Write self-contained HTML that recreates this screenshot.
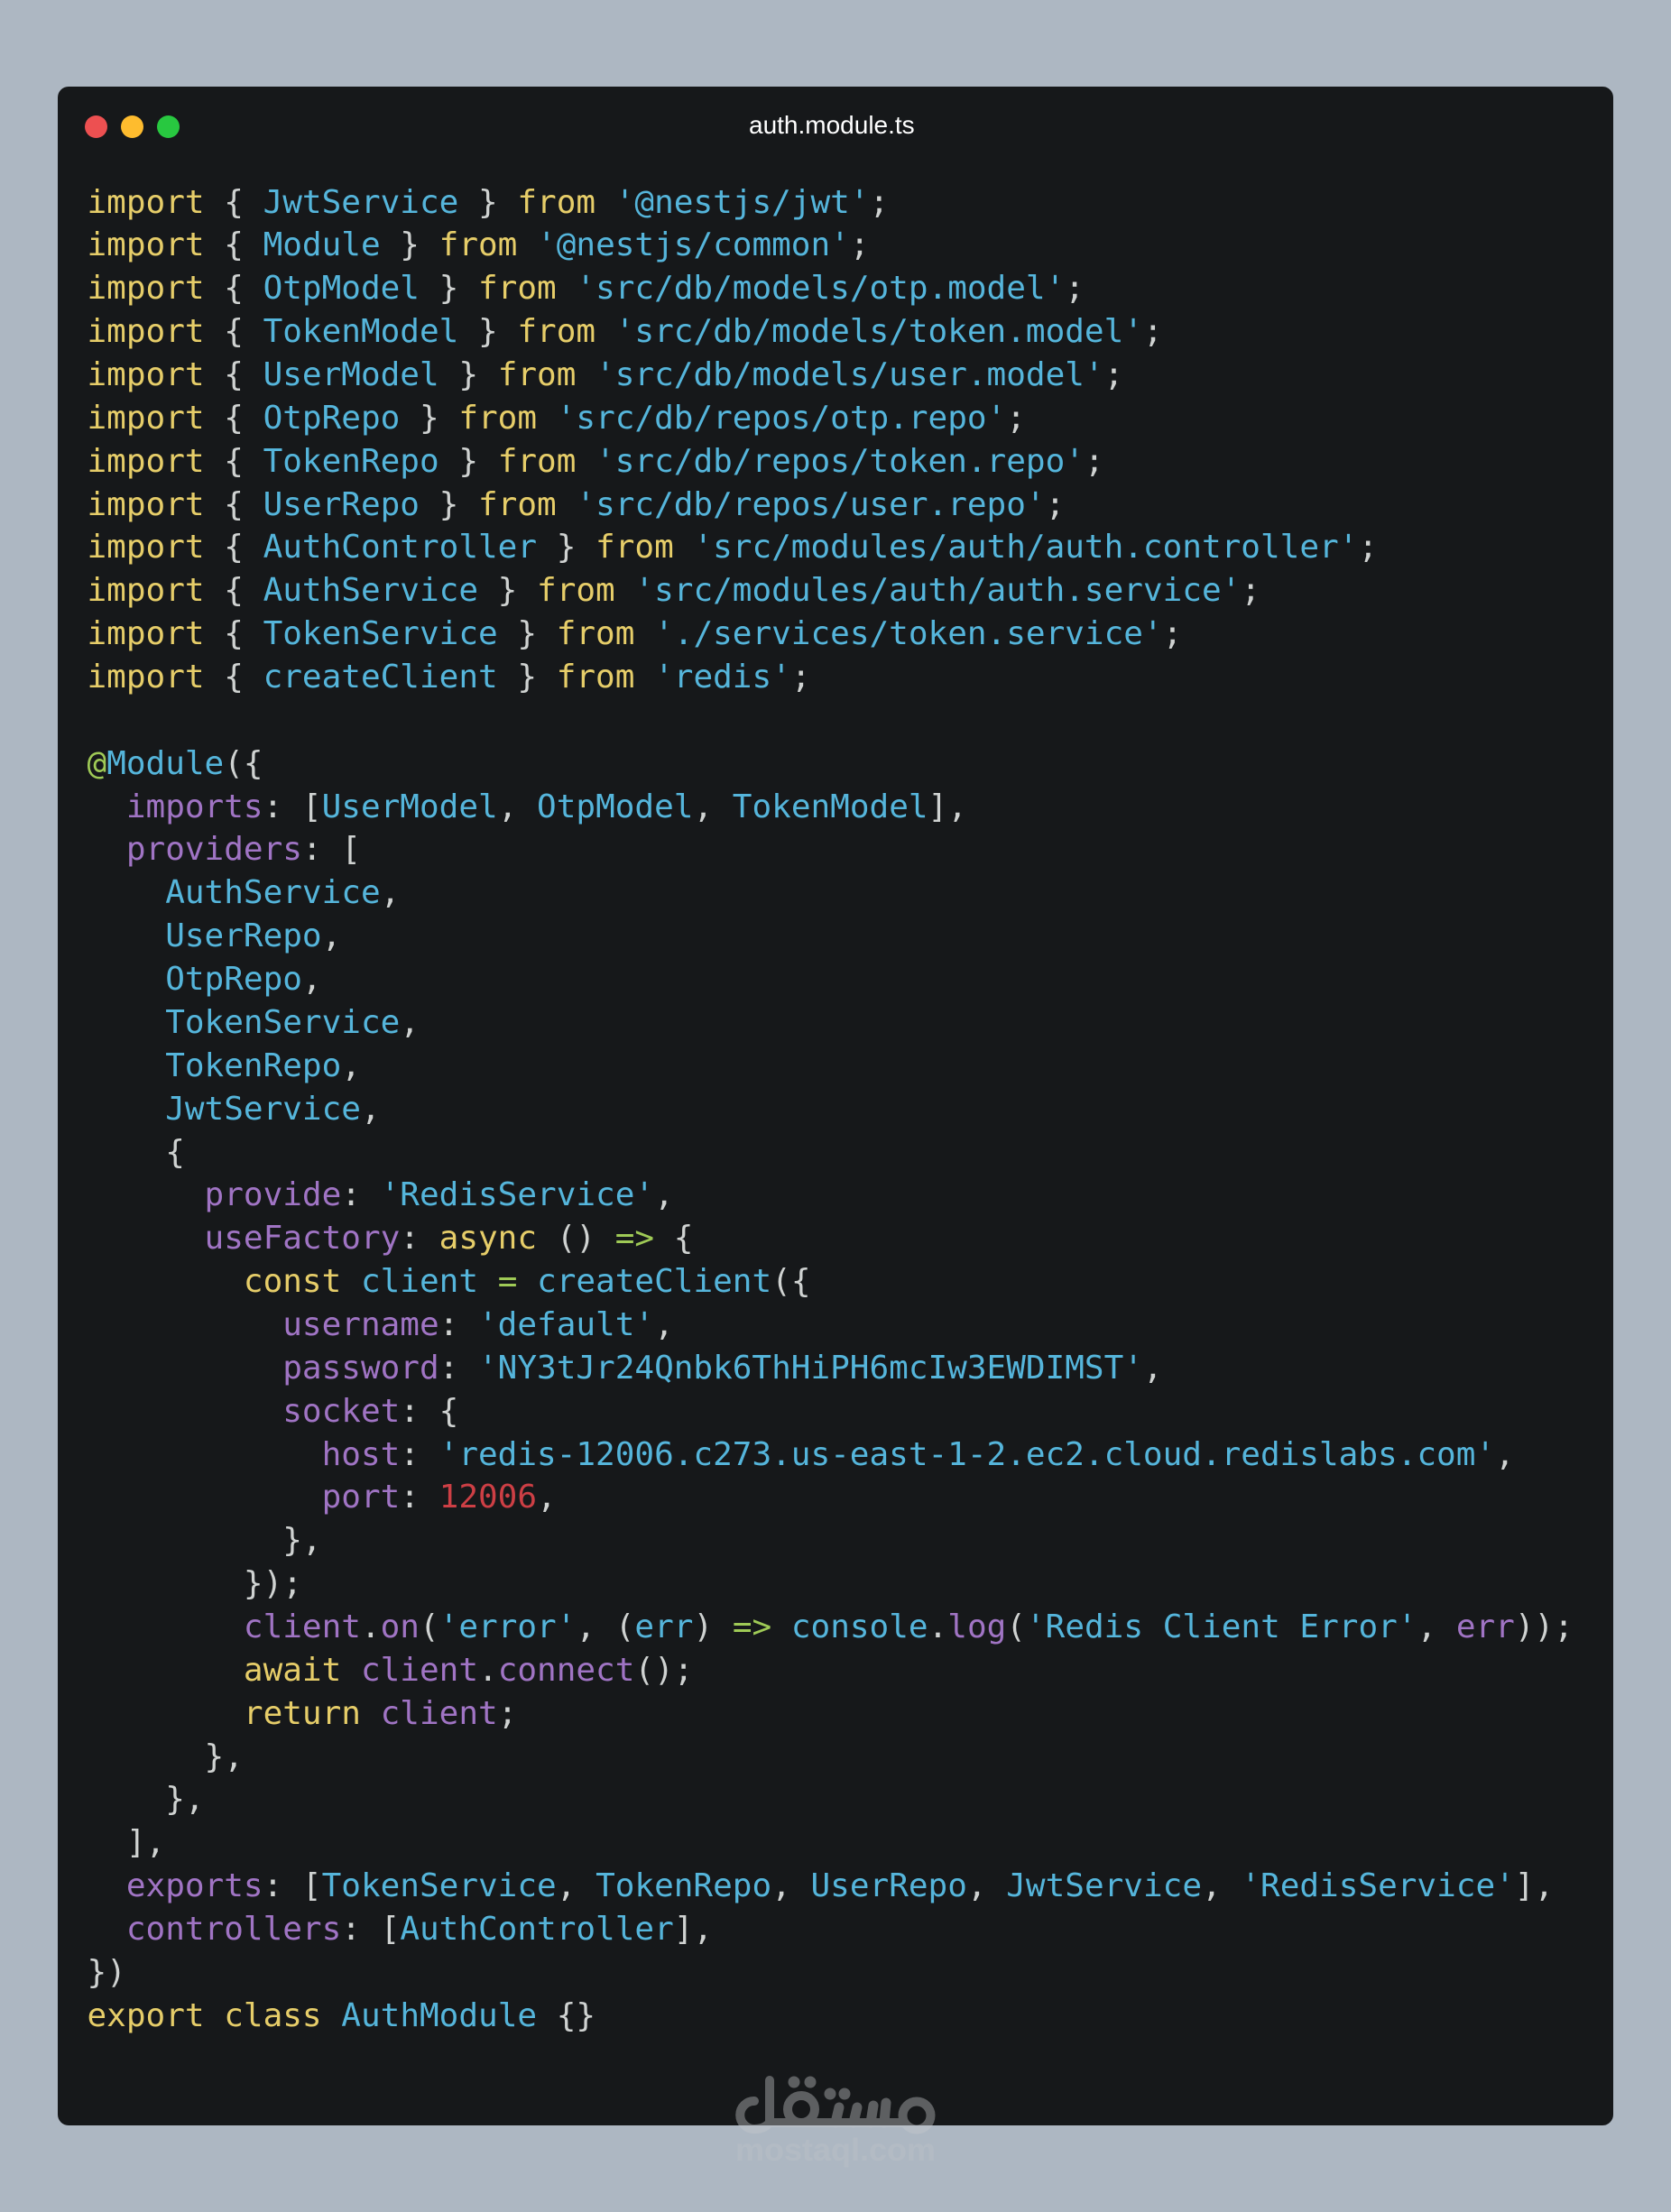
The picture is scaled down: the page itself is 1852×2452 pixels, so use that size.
<!DOCTYPE html>
<html lang="en">
<head>
<meta charset="utf-8">
<title>auth.module.ts</title>
<style>
html,body{margin:0;padding:0;background:#adb7c2;}
body{position:relative;width:1852px;height:2452px;overflow:hidden;}
#card{position:absolute;left:64px;top:96px;width:1724px;height:2260px;background:#16181a;border-radius:12px;}
.dot{position:absolute;top:127.5px;width:25px;height:25px;border-radius:50%;}
#title{position:absolute;left:830px;top:123px;font:28px/32px "Liberation Sans",sans-serif;color:#fff;white-space:pre;}
pre{position:absolute;left:96.5px;top:200.6px;margin:0;font:36px/47.86px "DejaVu Sans Mono",monospace;color:#cfd2d1;white-space:pre;}
.y{color:#e6cd69}.b{color:#55b5db}.p{color:#a074c4}.g{color:#9fca56}.r{color:#cd3f45}
svg{position:absolute;left:0;top:0;}
</style>
</head>
<body>
<div id="card"></div>
<div class="dot" style="left:93.5px;background:#ed5051"></div>
<div class="dot" style="left:133.5px;background:#febc2e"></div>
<div class="dot" style="left:173.5px;background:#28c840"></div>
<div id="title">auth.module.ts</div>
<pre><span class="y">import</span> { <span class="b">JwtService</span> } <span class="y">from</span> <span class="b">'@nestjs/jwt'</span>;
<span class="y">import</span> { <span class="b">Module</span> } <span class="y">from</span> <span class="b">'@nestjs/common'</span>;
<span class="y">import</span> { <span class="b">OtpModel</span> } <span class="y">from</span> <span class="b">'src/db/models/otp.model'</span>;
<span class="y">import</span> { <span class="b">TokenModel</span> } <span class="y">from</span> <span class="b">'src/db/models/token.model'</span>;
<span class="y">import</span> { <span class="b">UserModel</span> } <span class="y">from</span> <span class="b">'src/db/models/user.model'</span>;
<span class="y">import</span> { <span class="b">OtpRepo</span> } <span class="y">from</span> <span class="b">'src/db/repos/otp.repo'</span>;
<span class="y">import</span> { <span class="b">TokenRepo</span> } <span class="y">from</span> <span class="b">'src/db/repos/token.repo'</span>;
<span class="y">import</span> { <span class="b">UserRepo</span> } <span class="y">from</span> <span class="b">'src/db/repos/user.repo'</span>;
<span class="y">import</span> { <span class="b">AuthController</span> } <span class="y">from</span> <span class="b">'src/modules/auth/auth.controller'</span>;
<span class="y">import</span> { <span class="b">AuthService</span> } <span class="y">from</span> <span class="b">'src/modules/auth/auth.service'</span>;
<span class="y">import</span> { <span class="b">TokenService</span> } <span class="y">from</span> <span class="b">'./services/token.service'</span>;
<span class="y">import</span> { <span class="b">createClient</span> } <span class="y">from</span> <span class="b">'redis'</span>;

<span class="g">@</span><span class="b">Module</span>({
  <span class="p">imports</span>: [<span class="b">UserModel</span>, <span class="b">OtpModel</span>, <span class="b">TokenModel</span>],
  <span class="p">providers</span>: [
    <span class="b">AuthService</span>,
    <span class="b">UserRepo</span>,
    <span class="b">OtpRepo</span>,
    <span class="b">TokenService</span>,
    <span class="b">TokenRepo</span>,
    <span class="b">JwtService</span>,
    {
      <span class="p">provide</span>: <span class="b">'RedisService'</span>,
      <span class="p">useFactory</span>: <span class="y">async</span> () <span class="g">=&gt;</span> {
        <span class="y">const</span> <span class="b">client</span> <span class="g">=</span> <span class="b">createClient</span>({
          <span class="p">username</span>: <span class="b">'default'</span>,
          <span class="p">password</span>: <span class="b">'NY3tJr24Qnbk6ThHiPH6mcIw3EWDIMST'</span>,
          <span class="p">socket</span>: {
            <span class="p">host</span>: <span class="b">'redis-12006.c273.us-east-1-2.ec2.cloud.redislabs.com'</span>,
            <span class="p">port</span>: <span class="r">12006</span>,
          },
        });
        <span class="p">client</span>.<span class="p">on</span>(<span class="b">'error'</span>, (<span class="b">err</span>) <span class="g">=&gt;</span> <span class="b">console</span>.<span class="p">log</span>(<span class="b">'Redis Client Error'</span>, <span class="p">err</span>));
        <span class="y">await</span> <span class="p">client</span>.<span class="p">connect</span>();
        <span class="y">return</span> <span class="p">client</span>;
      },
    },
  ],
  <span class="p">exports</span>: [<span class="b">TokenService</span>, <span class="b">TokenRepo</span>, <span class="b">UserRepo</span>, <span class="b">JwtService</span>, <span class="b">'RedisService'</span>],
  <span class="p">controllers</span>: [<span class="b">AuthController</span>],
})
<span class="y">export</span> <span class="y">class</span> <span class="b">AuthModule</span> {}</pre>
<svg width="1852" height="2452" viewBox="0 0 1852 2452" xmlns="http://www.w3.org/2000/svg">
  <title>مستقل</title>
  <g opacity=".4" fill="none" stroke="#c8cacc" stroke-width="10" stroke-linecap="round">
    <path d="M836 2329A15.500 15.500 0 0 0 835.500 2360C843 2360 849 2358 853 2353L1002 2353"/>
    <path d="M853 2306V2353"/>
    <circle cx="888" cy="2338" r="15"/>
    <circle cx="1016" cy="2345" r="15.500"/>
    <path stroke-width="11" d="M926 2353L930 2336M946 2353L950 2336M965 2353L968 2334M980 2353L982 2331"/>
    <g fill="#c8cacc" stroke="none">
      <circle cx="880" cy="2308" r="6.500"/><circle cx="898" cy="2308" r="6.500"/>
      <circle cx="920" cy="2321" r="6.500"/><circle cx="936" cy="2321" r="6.500"/>
    </g>
  </g>
  <text x="815" y="2395" font-family="Liberation Sans, sans-serif" font-weight="700" font-size="35" fill="#c8cacc" opacity=".24" textLength="222" lengthAdjust="spacingAndGlyphs">mostaql.com</text>
</svg>
</body>
</html>
